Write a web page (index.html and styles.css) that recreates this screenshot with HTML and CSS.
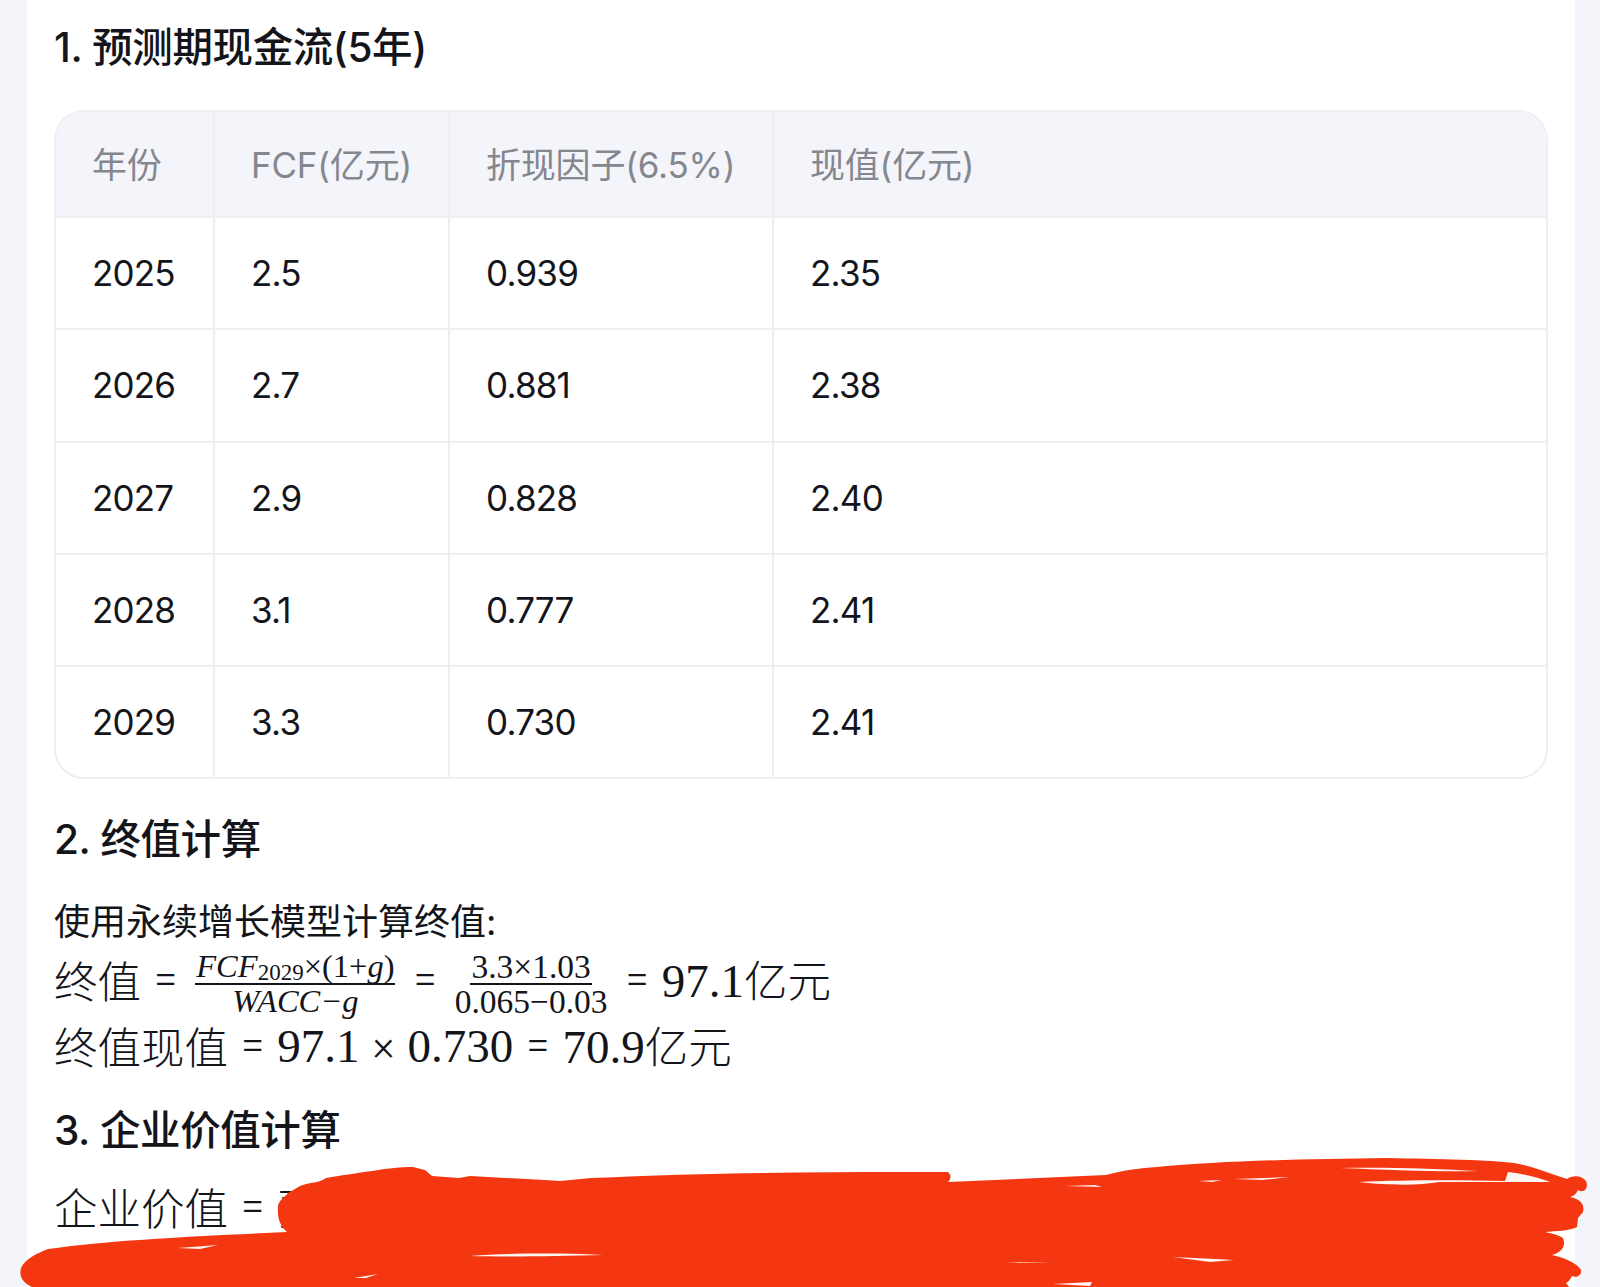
FILE: index.html
```html
<!DOCTYPE html>
<html lang="zh-CN">
<head>
<meta charset="utf-8">
<title>DCF</title>
<link rel="stylesheet" href="styles.css">
</head>
<body>
<main class="card">
  <h3 class="heading first">1. 预测期现金流(5年)</h3>
  <table class="data">
    <colgroup><col class="c1"><col class="c2"><col class="c3"><col></colgroup>
    <thead>
      <tr><th>年份</th><th>FCF(亿元)</th><th>折现因子(6.5%)</th><th>现值(亿元)</th></tr>
    </thead>
    <tbody>
      <tr><td>2025</td><td>2.5</td><td>0.939</td><td>2.35</td></tr>
      <tr><td>2026</td><td>2.7</td><td>0.881</td><td>2.38</td></tr>
      <tr><td>2027</td><td>2.9</td><td>0.828</td><td>2.40</td></tr>
      <tr><td>2028</td><td>3.1</td><td>0.777</td><td>2.41</td></tr>
      <tr><td>2029</td><td>3.3</td><td>0.730</td><td>2.41</td></tr>
    </tbody>
  </table>
  <h3 class="heading second">2. 终值计算</h3>
  <p class="text">使用永续增长模型计算终值:</p>
  <div class="math line-a">
    <span class="cjk">终值</span><span class="op">=</span>
    <span class="frac frac-a italic"><span class="num">FCF<sub class="upright">2029</sub><span class="upright">×(1+</span>g<span class="upright">)</span></span><span class="den">WACC−g</span></span>
    <span class="op">=</span>
    <span class="frac frac-b"><span class="num">3.3×1.03</span><span class="den">0.065−0.03</span></span>
    <span class="op">=</span>
    <span>97.1<span class="cjk">亿元</span></span>
  </div>
  <div class="math line-b"><span class="cjk">终值现值</span><span class="op">=</span><span>97.1</span><span class="op">×</span><span>0.730</span><span class="op">=</span><span>70.9<span class="cjk">亿元</span></span></div>
  <h3 class="heading third">3. 企业价值计算</h3>
  <div class="math line-c"><span class="cjk">企业价值</span><span class="op">=</span><span class="cjk">预</span></div>
</main>
<svg class="scribble" viewBox="0 0 1600 1287" width="1600" height="1287" aria-hidden="true">
  <path class="ink" d="M287 1232 C280 1226 277 1218 278 1206 C279 1200 284 1198 288 1193 L300 1186 C310 1182 320 1183 326 1178 L344 1175 C356 1174 360 1172 372 1171 C390 1168 400 1167 413 1167 L425 1170 L432 1176 L459 1178 L470 1176 L545 1180 L560 1181 L591 1178 C700 1173 800 1172 900 1172 L948 1172 Q953 1177 948 1182 L1106 1175 C1125 1170 1140 1168 1157 1167 C1220 1161 1300 1159 1387 1158 C1440 1159 1490 1160 1514 1163 C1532 1166 1548 1173 1567 1179 C1572 1175 1582 1175 1586 1181 C1589 1188 1584 1194 1578 1190 C1576 1194 1574 1196 1570 1197 C1580 1199 1585 1204 1583 1212 L1578 1218 L1577 1227 C1570 1231 1556 1231 1545 1232 C1555 1234 1560 1236 1563 1238 C1566 1246 1562 1252 1552 1255 C1566 1258 1578 1264 1581 1270 C1582 1276 1576 1278 1572 1276 C1570 1280 1568 1282 1566 1283 L1569 1287 L32 1287 C22 1282 19 1276 21 1268 C26 1258 36 1254 48 1249 C110 1240 200 1236 287 1232 Z"/>
  <path class="gap" d="M178 1248 L218 1245 L200 1249 Z"/>
  <path class="gap" d="M470 1256 C510 1253 560 1253 603 1255 C560 1256 510 1257 470 1256 Z"/>
  <path class="gap" d="M354 1278 L378 1274 L366 1278 Z"/>
  <path class="gap" d="M1065 1186 L1095 1185 L1102 1187 Z"/>
  <path class="gap" d="M1198 1181 L1222 1180 L1212 1182 Z"/>
  <path class="gap" d="M1234 1179 L1290 1177 L1262 1180 Z"/>
  <path class="gap" d="M1340 1168 C1390 1167 1440 1169 1478 1171 C1440 1172 1390 1170 1340 1168 Z"/>
  <path class="gap" d="M1359 1182 C1400 1180 1460 1180 1505 1181 L1508 1172 C1525 1174 1540 1178 1550 1182 L1440 1182 C1420 1185 1395 1186 1359 1182 Z"/>
  <path class="gap" d="M1005 1262 L1053 1263 L1020 1263 Z"/>
  <path class="gap" d="M1173 1257 C1195 1258 1215 1259 1234 1260 L1210 1262 Z"/>
  <path class="gap" d="M1053 1284 L1092 1282 L1090 1286 Z"/>
</svg>
</body>
</html>
```
FILE: styles.css
```css
html, body {
  margin: 0;
  height: 1287px;
  overflow: hidden;
}
body {
  position: relative;
  background: #f4f5fa;
  color: #14151a;
  font-family: Inter, "Noto Sans CJK SC", sans-serif;
}
.card {
  box-sizing: border-box;
  height: 1287px;
  margin: 0 25px 0 27px;
  padding: 0 27px;
  background: #fff;
  overflow: hidden;
}
.heading {
  margin: 0;
  font-size: 40.5px;
  line-height: 48px;
  font-weight: 500;
  letter-spacing: -0.4px;
}
.first { padding-top: 24px; margin-bottom: 38px; }
.second { margin-top: 37px; }
.third { margin-top: 29px; }
.data {
  width: 1494px;
  table-layout: fixed;
  border-collapse: separate;
  border-spacing: 0;
  border: 2px solid #eeeff2;
  border-radius: 30px;
  overflow: hidden;
  font-size: 35px;
  letter-spacing: -0.8px;
}
.c1 { width: 159px; }
.c2 { width: 235px; }
.c3 { width: 324px; }
.data th, .data td {
  padding: 0 0 0 36px;
  text-align: left;
  border-right: 2px solid #eeeff2;
  border-bottom: 2px solid #eeeff2;
  font-weight: 400;
}
.data th:last-child, .data td:last-child { border-right: 0; }
.data tbody tr:last-child td { border-bottom: 0; }
.data th {
  height: 100px;
  padding-bottom: 4px;
  background: #f4f5fa;
  color: #85878f;
  letter-spacing: -0.2px;
}
.data td { height: 110.3px; }
.text {
  margin: 38px 0 0;
  font-size: 36px;
  line-height: 40px;
}
.math {
  display: flex;
  align-items: center;
  gap: 12px;
  font-family: "Liberation Serif", "Noto Sans CJK SC", serif;
  font-size: 47px;
  line-height: 62px;
}
.cjk {
  font-family: "Noto Sans CJK SC", sans-serif;
  font-size: 43.5px;
  font-weight: 300;
}
.op {
  font-family: Roboto, sans-serif;
  font-size: 42px;
  font-weight: 300;
  margin: 0 1px;
}
.line-a { margin-top: 4px; height: 68px; }
.line-b { margin-top: 0; }
.line-c { margin-top: 21px; }
.frac {
  display: inline-flex;
  flex-direction: column;
  align-items: center;
  line-height: 33px;
  margin: 8px 5px 0;
}
.frac-a { font-size: 32.5px; }
.frac-b { font-size: 33.5px; }
.num {
  padding: 0 1px;
  border-bottom: 2px solid #14151a;
  white-space: nowrap;
}
.italic { font-style: italic; }
.upright { font-style: normal; }
sub { font-size: 23px; line-height: 0; vertical-align: -3px; }
.scribble {
  position: absolute;
  left: 0;
  top: 0;
}
.ink { fill: #f43711; }
.gap { fill: #fdf6f3; }
```
